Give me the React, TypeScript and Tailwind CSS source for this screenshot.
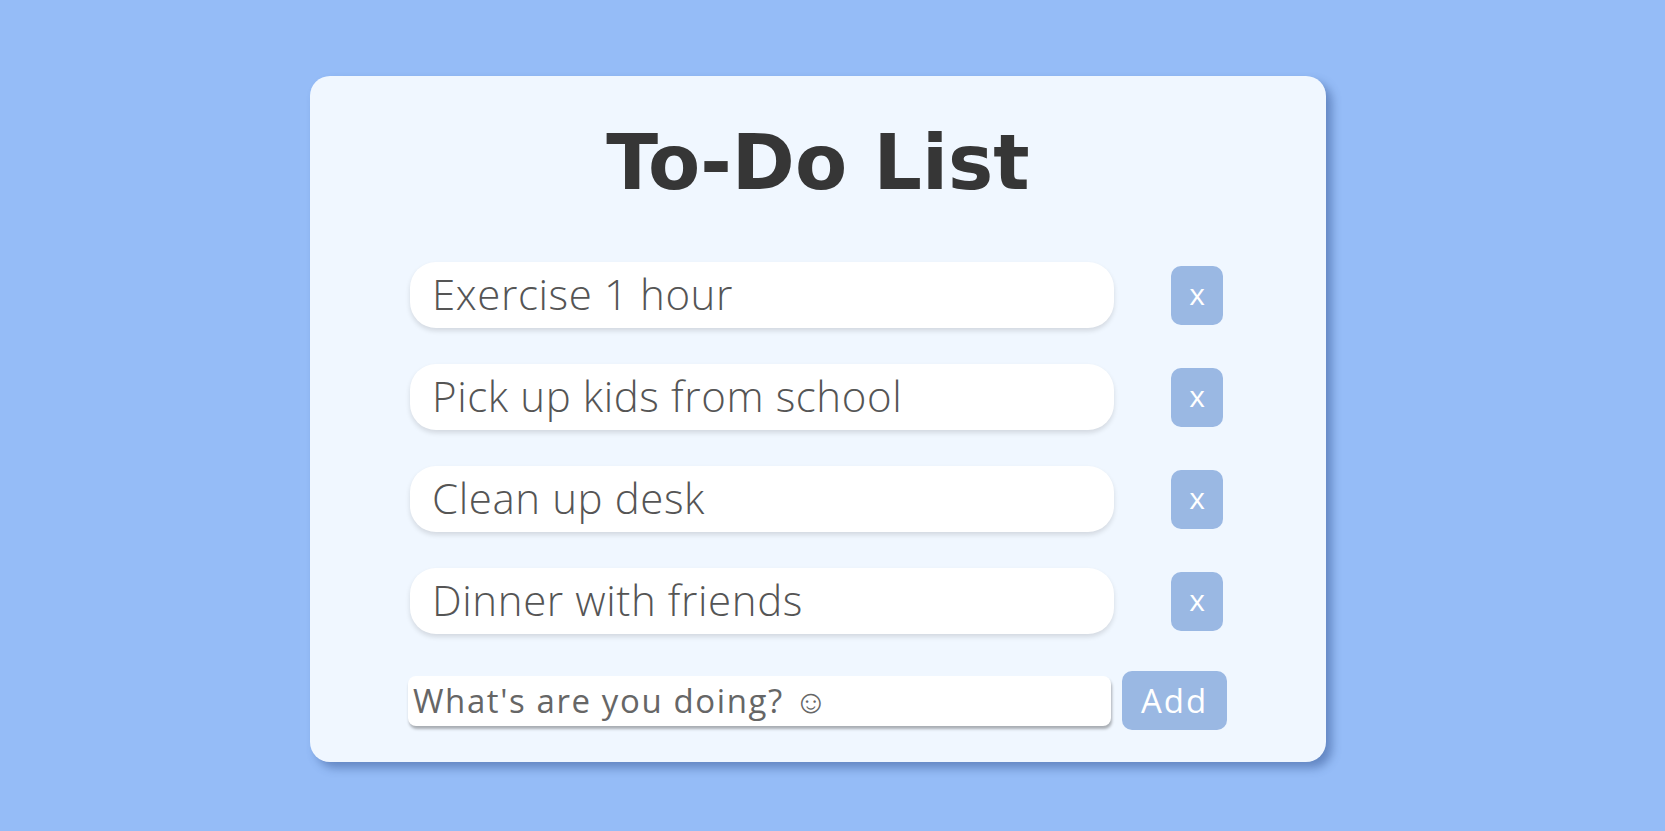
import React from "react";

const items = ["Exercise 1 hour", "Pick up kids from school", "Clean up desk", "Dinner with friends"];

export default function App() {
  return (
    <div
      className="w-full h-[831px] bg-[#95bcf7] flex items-start"
      style={{ fontFamily: '"Open Sans", "Liberation Sans", sans-serif' }}
    >
      <div className="ml-[310px] mt-[76px] w-[1016px] h-[686px] bg-[#f0f7ff] rounded-[20px] shadow-[6px_6px_10px_rgba(40,70,130,0.45)] flex flex-col">
        <h1 className="mt-[42px] h-[90px] text-center text-[76px] leading-[90px] font-bold text-[#363636] font-['DejaVu_Sans',sans-serif]">
          To-Do List
        </h1>
        <div className="mt-[54px] flex flex-col gap-[36px] pl-[100px]">
          {items.map((t) => (
            <div key={t} className="flex items-center">
              <div className="w-[704px] h-[66px] bg-white rounded-[26px] shadow-[0_3px_5px_rgba(0,0,0,0.12)] flex items-center pl-[22px] pb-[4px] text-[42px] font-light tracking-[0.6px] text-[#555555]">
                {t}
              </div>
              <button className="ml-[57px] w-[52px] h-[59px] rounded-[10px] bg-[#9ab8e3] text-white text-[30px] leading-none flex items-center justify-center pb-[2px]">
                x
              </button>
            </div>
          ))}
        </div>
        <div className="mt-[37px] flex items-center pl-[98px]">
          <div className="w-[703px] h-[50px] bg-white rounded-[8px] shadow-[1px_3px_3px_rgba(0,0,0,0.3)] flex items-center pl-[5px] text-[33px] tracking-[1.6px] text-[#666666]">
            What's are you doing? ☺
          </div>
          <button className="ml-[11px] w-[105px] h-[59px] rounded-[10px] bg-[#9ab8e3] text-white text-[33px] tracking-[2px] leading-none flex items-center justify-center">
            Add
          </button>
        </div>
      </div>
    </div>
  );
}
